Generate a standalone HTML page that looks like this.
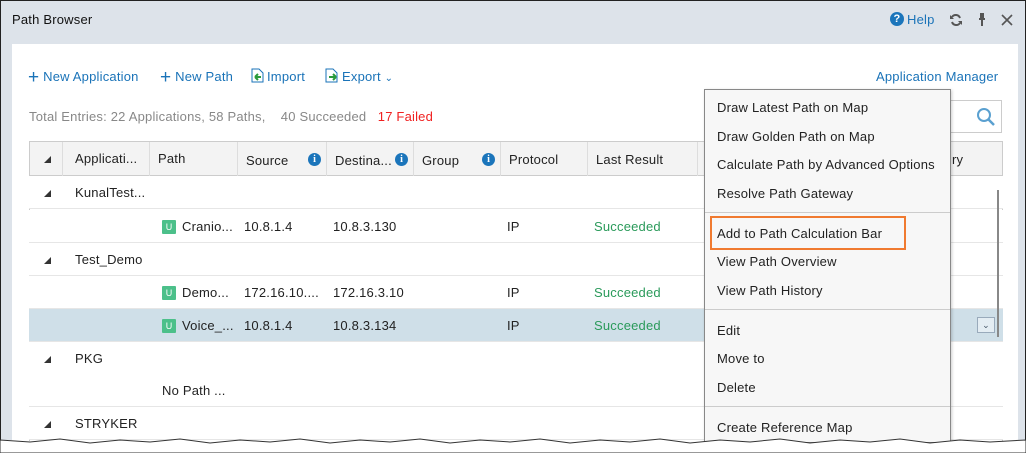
<!DOCTYPE html>
<html><head><style>
*{box-sizing:border-box;margin:0;padding:0}
body{width:1026px;height:453px;overflow:hidden;background:#fff;font-family:"Liberation Sans",sans-serif;font-size:13px;letter-spacing:.2px;color:#222;position:relative}
.abs{position:absolute}
.frame{left:0;top:0;width:1026px;height:440px;background:#dde3ea;border:1px solid #222;border-bottom:none}
.inner{left:12px;top:44px;width:1006px;height:396px;background:#fff}
.blue{color:#1a73b8}
.row{position:absolute;left:29px;width:974px;height:33px;border-bottom:1px solid #e6e6e6;background:#fff}
.row span{position:absolute;top:9px;white-space:nowrap}
.tri{width:0;height:0;border-left:7px solid transparent;border-bottom:7px solid #333;position:absolute;left:15px;top:14px}
.u{position:absolute;left:-20px;top:1px;width:14px;height:14px;background:#4cc08a;color:#fff;font-size:9px;font-style:normal;text-align:center;line-height:14px;border-radius:1px;letter-spacing:0}
.g{color:#2a9a5a}
.hd{position:absolute;top:0;height:35px;border-right:1px solid #ddd}
.hd span{position:absolute;top:11px;left:8px}
.info{position:absolute;width:13px;height:13px;border-radius:50%;background:#1b75bb;color:#fff;font-size:10px;font-weight:bold;text-align:center;line-height:13px;top:11px;font-family:"Liberation Serif",serif;letter-spacing:0}
.menu{left:704px;top:89px;width:247px;height:354px;background:#f7f7f7;border:1px solid #888;box-shadow:1px 1px 3px rgba(0,0,0,.2)}
.mi{position:absolute;left:12px;white-space:nowrap}
.sep{position:absolute;left:0;width:245px;height:1px;background:#ccc}
</style></head><body>
<div class="abs frame"></div>
<div class="abs" style="left:12px;top:12px;font-size:13px;color:#111">Path Browser</div>
<div class="abs" style="left:890px;top:12px;width:14px;height:14px;border-radius:50%;background:#1b75bb;color:#fff;font-size:11px;font-weight:bold;text-align:center;line-height:14px">?</div>
<div class="abs blue" style="left:907px;top:12px">Help</div>
<svg class="abs" style="left:949px;top:13px" width="14" height="14" viewBox="0 0 14 14"><path d="M11 5A4.5 4.5 0 0 0 3 4M3 9a4.5 4.5 0 0 0 8 1" stroke="#555" stroke-width="2" fill="none"/><path d="M1 2v4h4zM13 12V8H9z" fill="#555"/></svg>
<svg class="abs" style="left:977px;top:13px" width="10" height="14" viewBox="0 0 10 14"><path d="M3 1h4M5 1v4M2 6h6M5 6v7" stroke="#555" stroke-width="2"/><rect x="3" y="1" width="4" height="6" fill="#555"/></svg>
<svg class="abs" style="left:1001px;top:14px" width="12" height="12" viewBox="0 0 12 12"><path d="M1 1l10 10M11 1L1 11" stroke="#555" stroke-width="1.6"/></svg>
<div class="abs inner"></div>
<div class="abs blue" style="left:28px;top:69px;font-size:13px"><span style="font-size:19px;line-height:12px;vertical-align:-2px">+</span> New Application</div>
<div class="abs blue" style="left:160px;top:69px;font-size:13px"><span style="font-size:19px;line-height:12px;vertical-align:-2px">+</span> New Path</div>
<svg class="abs" style="left:251px;top:68px" width="13" height="15" viewBox="0 0 13 15"><path d="M1 1h7l4 4v9H1z" fill="#fff" stroke="#1a73b8"/><path d="M4 9h6M4 9l3-3M4 9l3 3" stroke="#2a9a3a" stroke-width="2" fill="none"/></svg>
<div class="abs blue" style="left:267px;top:69px">Import</div>
<svg class="abs" style="left:325px;top:68px" width="13" height="15" viewBox="0 0 13 15"><path d="M1 1h7l4 4v9H1z" fill="#fff" stroke="#1a73b8"/><path d="M4 9h7M11 9l-3-3M11 9l-3 3" stroke="#2a9a3a" stroke-width="2" fill="none"/></svg>
<div class="abs blue" style="left:342px;top:69px">Export <span style="font-size:10px">&#8964;</span></div>
<div class="abs blue" style="left:876px;top:69px">Application Manager</div>
<div class="abs" style="left:29px;top:109px;color:#888">Total Entries: 22 Applications, 58 Paths, &nbsp;&nbsp;&nbsp;40 Succeeded &nbsp;&nbsp;<span style="color:#f02020">17 Failed</span></div>
<div class="abs" style="left:950px;top:100px;width:52px;height:33px;border:1px solid #ccc;background:#fff"></div>
<svg class="abs" style="left:976px;top:107px" width="20" height="20" viewBox="0 0 20 20"><circle cx="8" cy="8" r="6" stroke="#5aa0d0" stroke-width="2" fill="none"/><path d="M12 12l6 6" stroke="#5aa0d0" stroke-width="2.5"/></svg>
<div class="abs" style="left:29px;top:141px;width:974px;height:300px;border:1px solid #ccc;border-bottom:none;background:#fff"></div>
<div class="abs" style="left:29px;top:141px;width:974px;height:35px;background:#f3f3f3;border:1px solid #ccc">
<div class="hd" style="left:0;width:33px"><div class="tri" style="left:14px;top:14px"></div></div>
<div class="hd" style="left:33px;width:87px"><span style="top:9px;left:12px">Applicati...</span></div>
<div class="hd" style="left:120px;width:88px"><span style="top:9px">Path</span></div>
<div class="hd" style="left:208px;width:89px"><span>Source</span><div class="info" style="left:70px">i</div></div>
<div class="hd" style="left:297px;width:87px"><span>Destina...</span><div class="info" style="left:68px">i</div></div>
<div class="hd" style="left:384px;width:87px"><span>Group</span><div class="info" style="left:68px">i</div></div>
<div class="hd" style="left:471px;width:87px"><span style="top:10px">Protocol</span></div>
<div class="hd" style="left:558px;width:110px"><span style="top:10px">Last Result</span></div>
<div class="abs" style="left:922px;top:10px">ry</div>
</div>
<div class="row" style="top:176px"><div class="tri"></div><span style="left:46px">KunalTest...</span></div>
<div class="row" style="top:210px"><span style="left:153px"><i class="u">U</i>Cranio...</span><span style="left:215px">10.8.1.4</span><span style="left:304px">10.8.3.130</span><span style="left:478px">IP</span><span class="g" style="left:565px">Succeeded</span></div>
<div class="row" style="top:243px"><div class="tri"></div><span style="left:46px">Test_Demo</span></div>
<div class="row" style="top:276px"><span style="left:153px"><i class="u">U</i>Demo...</span><span style="left:215px">172.16.10....</span><span style="left:304px">172.16.3.10</span><span style="left:478px">IP</span><span class="g" style="left:565px">Succeeded</span></div>
<div class="row" style="top:309px;background:#cfdfe8"><span style="left:153px"><i class="u">U</i>Voice_...</span><span style="left:215px">10.8.1.4</span><span style="left:304px">10.8.3.134</span><span style="left:478px">IP</span><span class="g" style="left:565px">Succeeded</span></div>
<div class="row" style="top:342px"><div class="tri"></div><span style="left:46px">PKG</span></div>
<div class="row" style="top:374px"><span style="left:133px">No Path ...</span></div>
<div class="row" style="top:407px"><div class="tri"></div><span style="left:46px">STRYKER</span></div>
<div class="abs" style="left:997px;top:190px;width:2px;height:147px;background:#888"></div>
<div class="abs" style="left:977px;top:317px;width:18px;height:16px;border:1px solid #9ab;background:#e4edf3;font-size:9px;text-align:center;line-height:14px;color:#456">&#8964;</div>
<div class="abs menu">
<div class="mi" style="top:10px">Draw Latest Path on Map</div>
<div class="mi" style="top:39px">Draw Golden Path on Map</div>
<div class="mi" style="top:67px">Calculate Path by Advanced Options</div>
<div class="mi" style="top:96px">Resolve Path Gateway</div>
<div class="sep" style="top:122px"></div>
<div class="abs" style="left:5px;top:126px;width:196px;height:34px;border:2px solid #f07a30"></div>
<div class="mi" style="top:136px">Add to Path Calculation Bar</div>
<div class="mi" style="top:164px">View Path Overview</div>
<div class="mi" style="top:193px">View Path History</div>
<div class="sep" style="top:219px"></div>
<div class="mi" style="top:233px">Edit</div>
<div class="mi" style="top:261px">Move to</div>
<div class="mi" style="top:290px">Delete</div>
<div class="sep" style="top:316px"></div>
<div class="mi" style="top:330px">Create Reference Map</div>
</div>
<svg class="abs" style="left:0;top:436px" width="1026" height="17" viewBox="0 0 1026 17"><path d="M0 4 L30 6 L60 3 L90 7 L120 4 L150 6 L180 3 L210 7 L240 4 L270 6 L300 3 L330 7 L360 4 L390 6 L420 3 L450 7 L480 4 L510 6 L540 3 L570 7 L600 4 L630 6 L660 3 L690 7 L720 4 L750 6 L780 3 L810 7 L840 4 L870 6 L900 3 L930 7 L960 4 L990 6 L1026 4 L1026 17 L0 17Z" fill="#fff" stroke="#333" stroke-width="1"/></svg>
</body></html>
